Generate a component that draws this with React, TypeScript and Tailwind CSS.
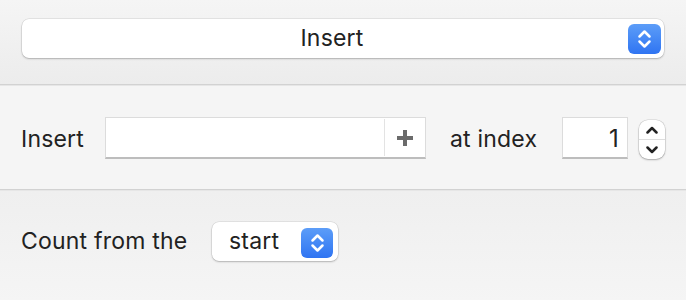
import React from "react";

const font = { fontFamily: "Inter, 'Open Sans', sans-serif" };

function BlueArrows({ className }: { className: string }) {
  return (
    <div className={`flex items-center justify-center rounded-[6px] bg-gradient-to-b from-[#5c9df8] to-[#2f74f2] ${className}`}>
      <svg width="15" height="22" viewBox="0 0 15 22" fill="none" stroke="white" strokeWidth="2.5" strokeLinecap="round" strokeLinejoin="round">
        <path d="M2.5 8.5 L7.5 3.5 L12.5 8.5" />
        <path d="M2.5 13.5 L7.5 18.5 L12.5 13.5" />
      </svg>
    </div>
  );
}

export default function App() {
  return (
    <div className="w-[686px] h-[300px] overflow-hidden text-[#222222] text-[23px] tracking-[0.2px]" style={font}>
      {/* Section 1 */}
      <div className="h-[84px] bg-gradient-to-b from-[#f5f5f5] to-[#ececec] pt-[19px] pl-[22px]">
        <div className="relative w-[642px] h-[39px] rounded-[7px] bg-white shadow-[0_0_0_0.5px_rgba(0,0,0,0.12),0_1px_2px_rgba(0,0,0,0.22)] flex items-center">
          <div className="w-[620px] text-center leading-none">Insert</div>
          <BlueArrows className="absolute right-[3px] top-[5px] w-[33px] h-[30px]" />
        </div>
      </div>
      <div className="h-[1px] bg-[#d2d2d2]" />
      <div className="h-[1px] bg-[#e6e6e6]" />
      {/* Section 2 */}
      <div className="h-[103px] bg-[#f5f5f5] pt-[31px] pl-[21px] flex items-start">
        <div className="h-[42px] w-[63px] pt-[3px] flex items-center leading-none whitespace-nowrap">Insert</div>
        <div className="ml-[21px] w-[321px] h-[42px] bg-white border border-[#dcdcdc] border-b-[#bdbdbd] border-b-2 flex">
          <div className="flex-1" />
          <div className="w-px bg-[#e3e3e3] my-[1px]" />
          <div className="w-[40px] flex items-center justify-center">
            <svg width="16" height="16" viewBox="0 0 16 16" fill="#6b6b6b">
              <rect x="0" y="6" width="16" height="4" />
              <rect x="6" y="0" width="4" height="16" />
            </svg>
          </div>
        </div>
        <div className="ml-[24px] w-[88px] h-[42px] pt-[3px] flex items-center leading-none whitespace-nowrap">at index</div>
        <div className="ml-[24px] w-[66px] h-[42px] pt-[2px] bg-white border border-[#dcdcdc] border-b-[#bdbdbd] border-b-2 flex items-center justify-end pr-[8px] leading-none text-[24px]">1</div>
        <div className="ml-[11px] mt-[3px] w-[26px] h-[39px] rounded-[9px] bg-white shadow-[0_0_0_0.5px_rgba(0,0,0,0.15),0_1px_2px_rgba(0,0,0,0.25)] flex flex-col">
          <div className="flex-1 flex items-center justify-center">
            <svg width="12" height="8" viewBox="0 0 12 8" fill="none" stroke="#222" strokeWidth="2.5" strokeLinecap="round" strokeLinejoin="round">
              <path d="M1.5 6.5 L6 2 L10.5 6.5" />
            </svg>
          </div>
          <div className="h-px bg-[#dedede]" />
          <div className="flex-1 flex items-center justify-center">
            <svg width="12" height="8" viewBox="0 0 12 8" fill="none" stroke="#222" strokeWidth="2.5" strokeLinecap="round" strokeLinejoin="round">
              <path d="M1.5 1.5 L6 6 L10.5 1.5" />
            </svg>
          </div>
        </div>
      </div>
      <div className="h-[1px] bg-[#d2d2d2]" />
      <div className="h-[1px] bg-[#e6e6e6]" />
      {/* Section 3 */}
      <div className="h-[110px] bg-gradient-to-b from-[#efefef] to-[#f5f5f5] pt-[31px] pl-[21px] flex items-start">
        <div className="h-[39px] w-[168px] flex items-center leading-none whitespace-nowrap">Count from the</div>
        <div className="relative ml-[23px] w-[126px] h-[39px] rounded-[7px] bg-white shadow-[0_0_0_0.5px_rgba(0,0,0,0.12),0_1px_2px_rgba(0,0,0,0.22)] flex items-center">
          <div className="pl-[17px] leading-none">start</div>
          <BlueArrows className="absolute right-[5px] top-[6px] w-[32px] h-[30px]" />
        </div>
      </div>
    </div>
  );
}
